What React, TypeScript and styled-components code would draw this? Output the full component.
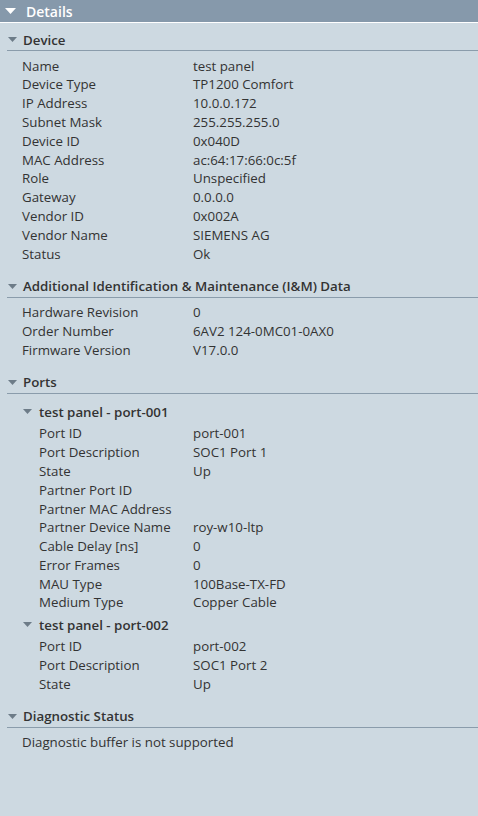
import React from 'react';
import styled, { createGlobalStyle } from 'styled-components';

const GlobalStyle = createGlobalStyle`
  html, body {
    margin: 0;
    padding: 0;
    background: #cdd9e1;
  }
  body {
    font-family: 'Open Sans', 'Noto Sans', 'Liberation Sans', sans-serif;
    font-size: 13.3px;
    color: #333;
  }
`;

const Panel = styled.div`
  width: 478px;
  min-height: 816px;
  background: #cdd9e1;
  display: flex;
  flex-direction: column;
`;

const TitleBar = styled.div`
  height: 22px;
  background: #8699ab;
  border-bottom: 1px solid #ffffff;
  display: flex;
  align-items: center;
  gap: 10px;
  padding-left: 5px;
  color: #ffffff;
  font-weight: 600;
  font-size: 14px;
`;

const Body = styled.div`
  display: flex;
  flex-direction: column;
  gap: 12.2px;
  padding-top: 6px;
`;

const Section = styled.section`
  display: flex;
  flex-direction: column;
  padding-left: 7px;
`;

const SectionHeader = styled.div`
  height: 21px;
  border-bottom: 1px solid #8a9cab;
  display: flex;
  align-items: center;
  gap: 6px;
  padding-left: 1px;
  font-weight: 600;
  font-size: 13.3px;
`;

const SectionContent = styled.div`
  display: flex;
  flex-direction: column;
  padding-top: 5.6px;
  padding-left: 15px;
`;

const SubHeader = styled.div`
  height: 25px;
  display: flex;
  align-items: center;
  gap: 7px;
  padding-left: 1px;
  font-weight: 600;
`;

const SubContent = styled.div`
  display: flex;
  flex-direction: column;
  padding-left: 17px;
`;

const Row = styled.div<{ $indent?: number }>`
  display: grid;
  grid-template-columns: ${(p) => 171 - (p.$indent ?? 0)}px 1fr;
  height: 18.8px;
  line-height: 18.8px;
  white-space: nowrap;
`;

const Note = styled.div`
  height: 18.8px;
  line-height: 18.8px;
`;

const Caret = ({ size = 9, color = '#6d7c88' }: { size?: number; color?: string }) => (
  <svg width={size} height={Math.ceil(size / 2)} viewBox={`0 0 ${size} ${Math.ceil(size / 2)}`}>
    <polygon points={`0,0 ${size},0 ${size / 2},${Math.ceil(size / 2)}`} fill={color} />
  </svg>
);

type Pair = [string, string];

const device: Pair[] = [
  ['Name', 'test panel'],
  ['Device Type', 'TP1200 Comfort'],
  ['IP Address', '10.0.0.172'],
  ['Subnet Mask', '255.255.255.0'],
  ['Device ID', '0x040D'],
  ['MAC Address', 'ac:64:17:66:0c:5f'],
  ['Role', 'Unspecified'],
  ['Gateway', '0.0.0.0'],
  ['Vendor ID', '0x002A'],
  ['Vendor Name', 'SIEMENS AG'],
  ['Status', 'Ok'],
];

const im: Pair[] = [
  ['Hardware Revision', '0'],
  ['Order Number', '6AV2 124-0MC01-0AX0'],
  ['Firmware Version', 'V17.0.0'],
];

const ports: { title: string; rows: Pair[] }[] = [
  {
    title: 'test panel - port-001',
    rows: [
      ['Port ID', 'port-001'],
      ['Port Description', 'SOC1 Port 1'],
      ['State', 'Up'],
      ['Partner Port ID', ''],
      ['Partner MAC Address', ''],
      ['Partner Device Name', 'roy-w10-ltp'],
      ['Cable Delay [ns]', '0'],
      ['Error Frames', '0'],
      ['MAU Type', '100Base-TX-FD'],
      ['Medium Type', 'Copper Cable'],
    ],
  },
  {
    title: 'test panel - port-002',
    rows: [
      ['Port ID', 'port-002'],
      ['Port Description', 'SOC1 Port 2'],
      ['State', 'Up'],
    ],
  },
];

const Rows = ({ data, indent }: { data: Pair[]; indent?: number }) => (
  <>
    {data.map(([k, v]) => (
      <Row key={k} $indent={indent}>
        <span>{k}</span>
        <span>{v}</span>
      </Row>
    ))}
  </>
);

const Group = ({ title, children }: { title: string; children: React.ReactNode }) => (
  <Section>
    <SectionHeader>
      <Caret />
      {title}
    </SectionHeader>
    <SectionContent>{children}</SectionContent>
  </Section>
);

export default function App() {
  return (
    <>
      <GlobalStyle />
      <Panel>
        <TitleBar>
          <Caret size={11} color="#ffffff" />
          Details
        </TitleBar>
        <Body>
          <Group title="Device">
            <Rows data={device} />
          </Group>
          <Group title="Additional Identification & Maintenance (I&M) Data">
            <Rows data={im} />
          </Group>
          <Group title="Ports">
            {ports.map((p) => (
              <React.Fragment key={p.title}>
                <SubHeader>
                  <Caret />
                  {p.title}
                </SubHeader>
                <SubContent>
                  <Rows data={p.rows} indent={17} />
                </SubContent>
              </React.Fragment>
            ))}
          </Group>
          <Group title="Diagnostic Status">
            <Note>Diagnostic buffer is not supported</Note>
          </Group>
        </Body>
      </Panel>
    </>
  );
}
